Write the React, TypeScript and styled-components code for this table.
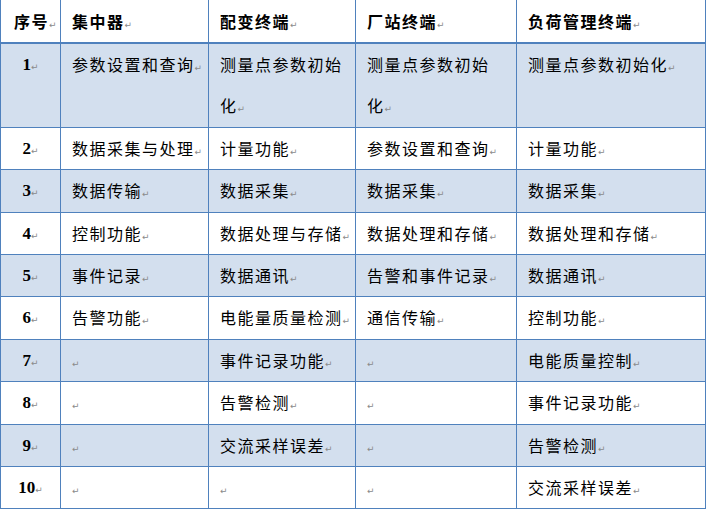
import React from "react";
import styled, { createGlobalStyle } from "styled-components";

const Global = createGlobalStyle`
  html, body { margin: 0; padding: 0; background: #ffffff; }
  body { font-family: "Noto Sans CJK SC", "Noto Sans", sans-serif; }
`;

const BORDER = "#4f81bd";

const Table = styled.table`
  border-collapse: collapse;
  table-layout: fixed;
  width: 705px;
  color: #000;
`;

const HeadRow = styled.tr`
  background: #ffffff;
`;

const Row = styled.tr<{ $shaded: boolean }>`
  background: ${(p) => (p.$shaded ? "#d3dfee" : "#ffffff")};
`;

const HeadCell = styled.th`
  border-left: 1px solid ${BORDER};
  border-right: 1px solid ${BORDER};
  border-bottom: 2px solid ${BORDER};
  padding: 0 12px 0 11px;
  height: 42px;
  line-height: 42px;
  text-align: left;
  font-family: "Noto Sans CJK SC", sans-serif;
  font-weight: 700;
  font-size: 16px;
  letter-spacing: 1.5px;
  vertical-align: middle;
`;

const FirstHeadCell = styled(HeadCell)`
  padding-left: 13px;
  padding-right: 0;
`;

const Cell = styled.td`
  border: 1px solid ${BORDER};
  padding: 0 12px 0 11px;
  line-height: 41.4px;
  font-family: "Noto Sans CJK SC", sans-serif;
  font-weight: 400;
  font-size: 16px;
  letter-spacing: 1.5px;
  vertical-align: top;
  word-break: break-all;
`;

const NumCell = styled(Cell)`
  padding: 0;
  text-align: center;
  font-family: "Liberation Serif", "Times New Roman", serif;
  font-weight: 700;
  font-size: 17px;
  letter-spacing: 0;
`;

const Mark = styled.span`
  display: inline-block;
  width: 0;
  line-height: 0;
  white-space: nowrap;
  overflow: visible;
  font-family: "DejaVu Sans", sans-serif;
  font-weight: 400;
  font-size: 9px;
  letter-spacing: 0;
  color: #8a8a8a;
  vertical-align: baseline;
`;

const NumMark = styled(Mark)`
  width: auto;
`;

const headers = ["集中器", "配变终端", "厂站终端", "负荷管理终端"];

const rows: string[][] = [
  ["参数设置和查询", "测量点参数初始化", "测量点参数初始化", "测量点参数初始化"],
  ["数据采集与处理", "计量功能", "参数设置和查询", "计量功能"],
  ["数据传输", "数据采集", "数据采集", "数据采集"],
  ["控制功能", "数据处理与存储", "数据处理和存储", "数据处理和存储"],
  ["事件记录", "数据通讯", "告警和事件记录", "数据通讯"],
  ["告警功能", "电能量质量检测", "通信传输", "控制功能"],
  ["", "事件记录功能", "", "电能质量控制"],
  ["", "告警检测", "", "事件记录功能"],
  ["", "交流采样误差", "", "告警检测"],
  ["", "", "", "交流采样误差"],
];

const RET = "\u21b5";

export default function App() {
  return (
    <>
      <Global />
      <Table>
        <colgroup>
          <col style={{ width: 60 }} />
          <col style={{ width: 148 }} />
          <col style={{ width: 147 }} />
          <col style={{ width: 161 }} />
          <col style={{ width: 189 }} />
        </colgroup>
        <thead>
          <HeadRow>
            <FirstHeadCell>
              序号<Mark>{RET}</Mark>
            </FirstHeadCell>
            {headers.map((h) => (
              <HeadCell key={h}>
                {h}
                <Mark>{RET}</Mark>
              </HeadCell>
            ))}
          </HeadRow>
        </thead>
        <tbody>
          {rows.map((r, i) => (
            <Row key={i} $shaded={i % 2 === 0}>
              <NumCell>
                {i + 1}
                <NumMark>{RET}</NumMark>
              </NumCell>
              {r.map((t, j) => (
                <Cell key={j}>
                  {t}
                  <Mark>{RET}</Mark>
                </Cell>
              ))}
            </Row>
          ))}
        </tbody>
      </Table>
    </>
  );
}
